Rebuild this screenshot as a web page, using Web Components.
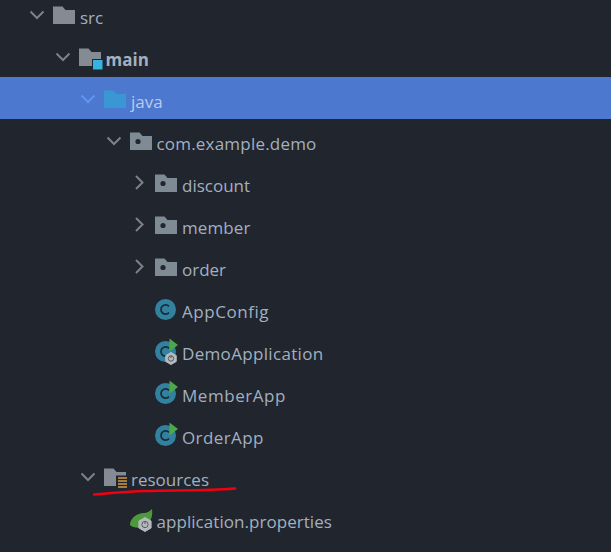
<!DOCTYPE html>
<html><head><meta charset="utf-8">
<style>
html,body{margin:0;padding:0;background:#21252e;height:100%;overflow:hidden}
body{font-family:"Open Sans","Noto Sans",sans-serif}
</style></head><body>
<project-tree>
<tree-row level="0" chev="open" icon="folder">src</tree-row>
<tree-row level="1" chev="open" icon="module" bold>main</tree-row>
<tree-row level="2" chev="open" icon="source" selected>java</tree-row>
<tree-row level="3" chev="open" icon="pkg" ls=".2">com.example.demo</tree-row>
<tree-row level="4" chev="closed" icon="pkg">discount</tree-row>
<tree-row level="4" chev="closed" icon="pkg" ls=".1">member</tree-row>
<tree-row level="4" chev="closed" icon="pkg">order</tree-row>
<tree-row level="4" icon="cls" ls=".55">AppConfig</tree-row>
<tree-row level="4" icon="spring" ls=".33">DemoApplication</tree-row>
<tree-row level="4" icon="run" ls=".55">MemberApp</tree-row>
<tree-row level="4" icon="run" ls=".4">OrderApp</tree-row>
<tree-row level="2" chev="open" icon="res">resources</tree-row>
<tree-row level="3" icon="props" ls=".05">application.properties</tree-row>
<svg slot="overlay" width="611" height="552" viewBox="0 0 611 552" fill="none"><path d="M94 494.5C112 493 128 491.5 146 491C172 490 205 491 235 488.5" stroke="#f00010" stroke-width="2.6" stroke-linecap="round"/></svg>
</project-tree>
<script>
const gear=(x,y,r)=>`<path d="M${x} ${y-r}l${r*.87} ${r*.5}v${r}l-${r*.87} ${r*.5}l-${r*.87} -${r*.5}v-${r}z" fill="#b4babe" stroke="#b4babe" stroke-width="1" stroke-linejoin="round"/><circle cx="${x}" cy="${y}" r="${r*.45}" fill="none" stroke="#565b63" stroke-width="1"/><path d="M${x} ${y-r*.5}v${r*.45}" stroke="#565b63" stroke-width="1"/>`;
const folder=c=>`<path d="M0 1.5h9.5l3 3.5H22V19H0z" fill="${c}"/>`;
const cls=`<circle cx="10.5" cy="10.5" r="10.5" fill="#32829f"/><path d="M14 7.4a4.6 4.6 0 1 0 0 6.2" fill="none" stroke="#1f2a33" stroke-width="1.7"/>`;
const play=`<path d="M14.5 -2.5L23 4L14.5 10.5z" fill="#4ca84b"/>`;
const icons={
 folder:folder('#848b92'),
 module:folder('#848b92')+`<rect x="13" y="12" width="10.5" height="10.5" fill="#21252e"/><rect x="14" y="13" width="9.5" height="9.5" fill="#35b4e0"/>`,
 source:folder('#3a97d4'),
 pkg:folder('#7f8b94')+`<circle cx="8" cy="10.5" r="2.6" fill="#22262e"/>`,
 res:folder('#848b92')+`<rect x="12" y="8.5" width="12" height="14" fill="#21252e"/><path d="M14 11h9M14 14h9M14 17h9M14 20h9" stroke="#d39b45" stroke-width="1.7"/>`,
 cls,
 run:cls+play,
 spring:cls+play+gear(16,17.5,6),
 props:`<path d="M0 16C0 9 7 4 14 4C17 4 20 2 22 0C23 7 21 13 15 17C10 20 3 19 0 16Z" fill="#4c9a3d"/>`+gear(15,15.5,7)
};
class ProjectTree extends HTMLElement{constructor(){super();this.attachShadow({mode:'open'}).innerHTML=`<style>
:host{display:block;position:relative;width:611px;height:552px;overflow:hidden;background:#21252e}
.list{display:flex;flex-direction:column;margin-top:-7px}
.over{position:absolute;inset:0;pointer-events:none}
</style><div class="list"><slot></slot></div><div class="over"><slot name="overlay"></slot></div>`}}
class TreeRow extends HTMLElement{constructor(){super();const r=this.attachShadow({mode:'open'});
 const lv=+this.getAttribute('level')||0,ch=this.getAttribute('chev'),ic=this.getAttribute('icon');
 const sel=this.hasAttribute('selected');
 const cp=ch==='open'?'M3.5 7.5L10 14L16.5 7.5':'M7 4L13.5 10.5L7 17';
 const cc=sel?'#5f95f0':'#7b828a';
 r.innerHTML=`<style>
:host{display:flex;align-items:center;height:42px;box-sizing:border-box;padding:6px 0 0 ${27+lv*25.5}px;color:${sel?'#b9cbe6':'#a2b0c0'};font-size:17px;letter-spacing:${this.getAttribute('ls')||0}px;font-weight:${this.hasAttribute('bold')?700:400};background:${sel?'#4c78d0':'transparent'};white-space:nowrap}
.chev{width:20px;height:21px;flex:none;margin-right:6px;margin-top:-5px}
.ic{width:22px;height:22px;flex:none;margin-right:5px;margin-top:-3px;overflow:visible}
.t{margin-top:1px}
</style><svg class="chev" viewBox="0 0 20 21" fill="none"><path d="${ch?cp:''}" stroke="${cc}" stroke-width="2"/></svg><svg class="ic" viewBox="0 0 22 22">${icons[ic]}</svg><span class="t"><slot></slot></span>`;
}}
customElements.define('project-tree',ProjectTree);
customElements.define('tree-row',TreeRow);
</script>
</body></html>
